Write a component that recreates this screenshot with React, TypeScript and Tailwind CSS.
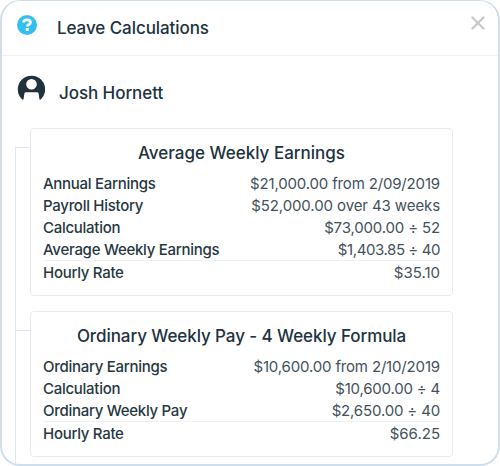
import React from 'react';
import clsx from 'clsx';

interface Row {
  label: string;
  value: string;
  valueClass?: string;
}

interface CalculationCardProps {
  title: string;
  titleClass?: string;
  rows: Row[];
  className?: string;
}

const weeklyEarnings: Row[] = [
  { label: 'Annual Earnings', value: '$21,000.00 from 2/09/2019' },
  { label: 'Payroll History', value: '$52,000.00 over 43 weeks', valueClass: 'tracking-[-0.1px]' },
  { label: 'Calculation', value: '$73,000.00 ÷ 52' },
  { label: 'Average Weekly Earnings', value: '$1,403.85 ÷ 40', valueClass: 'tracking-[-0.42px]' },
  { label: 'Hourly Rate', value: '$35.10', valueClass: 'tracking-normal' },
];

const ordinaryPay: Row[] = [
  { label: 'Ordinary Earnings', value: '$10,600.00 from 2/10/2019' },
  { label: 'Calculation', value: '$10,600.00 ÷ 4', valueClass: 'tracking-[-0.2px]' },
  { label: 'Ordinary Weekly Pay', value: '$2,650.00 ÷ 40' },
  { label: 'Hourly Rate', value: '$66.25', valueClass: 'tracking-normal' },
];

function HelpIcon() {
  return (
    <svg viewBox="0 0 20 20" className="h-5 w-5 shrink-0" fill="none">
      <circle cx="10" cy="10" r="10" fill="#35bfef" />
      <path d="M6.4 7.5C6.7 5.6 8 4.9 10 4.9c2.1 0 3.5.9 3.5 2.5 0 2.2-3.2 2-3.2 4.2" stroke="#fff" strokeWidth="2.7" />
      <rect x="8.8" y="12.9" width="3" height="3" rx=".6" fill="#fff" />
    </svg>
  );
}

function UserIcon() {
  return (
    <svg viewBox="0 0 28 28" className="h-7 w-7 shrink-0">
      <path
        fill="#20323e"
        fillRule="evenodd"
        d="M5.2 25.4A13.7 13.7 0 1 1 23.8 25.4L22.5 25.4L21.6 19.5Q21.4 18.2 20 18.2H9Q7.6 18.2 7.4 19.5L6.5 25.4ZM14.5 5a5.3 5.3 0 1 0 0 10.6a5.3 5.3 0 1 0 0-10.6Z"
      />
    </svg>
  );
}

function CalculationCard({ title, titleClass, rows, className }: CalculationCardProps) {
  return (
    <section className={clsx('relative w-[423px] rounded-[4px] border border-[#e7ebef] bg-white px-3', className)}>
      {/* Branch from the tree line */}
      <div className="absolute top-[18px] -left-[15px] h-px w-[14px] bg-[#dde6ef]" />
      <h2 className={clsx('pt-3 text-center text-[17px] leading-6 font-medium text-[#20323e]', titleClass)}>
        {title}
      </h2>
      <dl className="mt-2 text-[15px] leading-[22px]">
        {rows.map((row, index) => (
          <div
            key={row.label}
            className={clsx('flex justify-between', index === rows.length - 1 && '-mt-px border-t border-[#eff2f4] pt-px')}
          >
            <dt className="font-medium tracking-[-0.28px] text-[#263741]">{row.label}</dt>
            <dd className={clsx('text-[#43515b]', row.valueClass ?? 'tracking-[-0.16px]')}>{row.value}</dd>
          </div>
        ))}
      </dl>
    </section>
  );
}

export default function App() {
  return (
    <main className="h-[466px] w-[500px] overflow-hidden rounded-[20px] border-2 border-t border-[#d0deec] bg-white font-['Inter',sans-serif] text-[#20323e]">
      <header className="flex h-[55px] items-center border-b border-[#edf2f4] pr-[13px] pl-[15px]">
        <div className="mb-[7px]">
          <HelpIcon />
        </div>
        <h1 className="ml-5 text-[17px] leading-6 font-medium tracking-[-0.07px]">Leave Calculations</h1>
        <button className="mb-[10px] ml-auto" aria-label="Close">
          <svg viewBox="0 0 14 14" className="h-[14px] w-[14px]" stroke="#c5c9cb" strokeWidth="2.3" strokeLinecap="round">
            <path d="m1.5 1.5 11 11m0-11-11 11" />
          </svg>
        </button>
      </header>
      <div className="flex h-[72px] items-center pl-[15px]">
        <div className="mb-[8px]">
          <UserIcon />
        </div>
        <p className="mt-[2px] ml-[14px] text-[17px] leading-6 font-medium tracking-[-0.07px]">Josh Hornett</p>
      </div>
      <div className="relative pl-7">
        {/* Tree line */}
        <div className="absolute top-[19px] left-[13px] h-[320px] w-px bg-[#dde6ef]" />
        <CalculationCard title="Average Weekly Earnings" rows={weeklyEarnings} className="h-[168px]" />
        <CalculationCard
          title="Ordinary Weekly Pay - 4 Weekly Formula"
          titleClass="tracking-[-0.08px]"
          rows={ordinaryPay}
          className="mt-[15px] h-[146px]"
        />
      </div>
    </main>
  );
}
